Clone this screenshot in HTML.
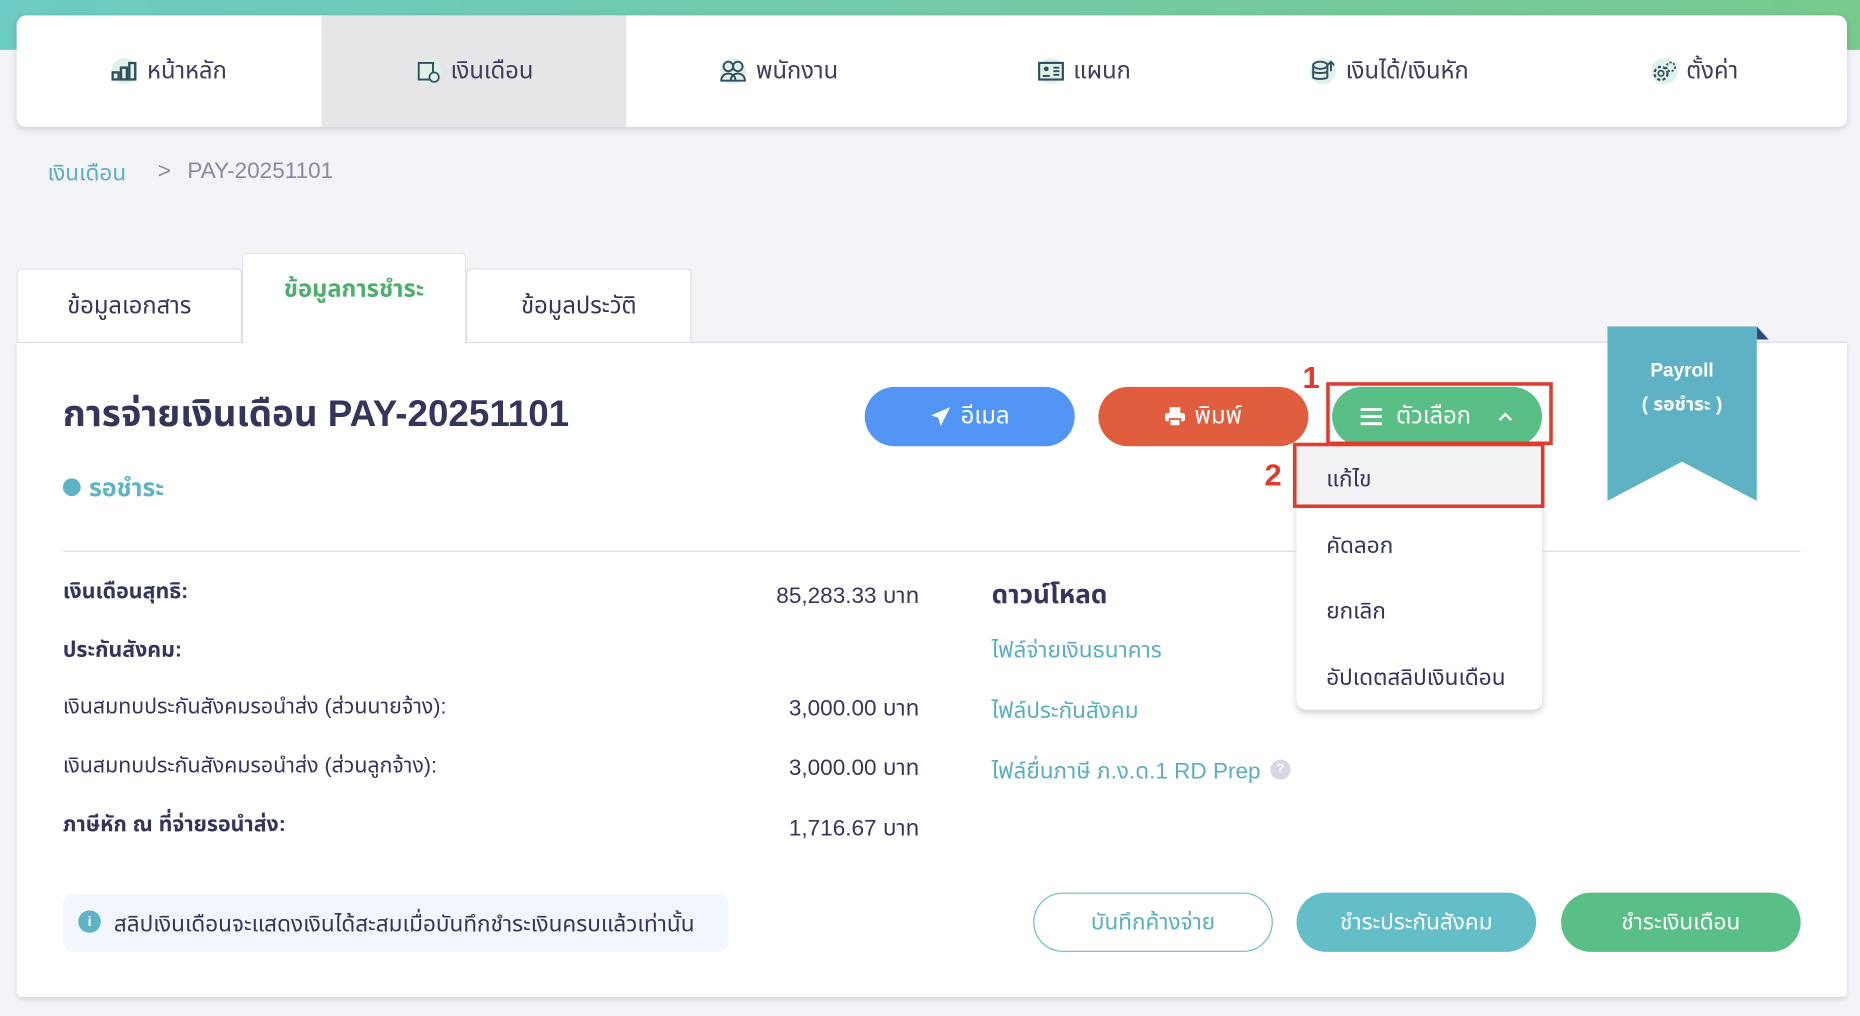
<!DOCTYPE html>
<html><head><meta charset="utf-8">
<style>
*{box-sizing:border-box;margin:0;padding:0}
html,body{width:1860px;height:1016px;overflow:hidden;background:#f3f3f8;font-family:"Liberation Sans","Noto Sans Thai","Loma","Garuda",sans-serif;color:#34355a}
#w{position:absolute;left:0;top:0;width:1568px;height:856px;transform:scale(1.18622,1.18692);transform-origin:0 0}
.a{position:absolute}
.bar{left:0;top:0;width:1568px;height:42px;background:linear-gradient(90deg,#6ccbc3,#77c98c)}
.nav{left:14px;top:13px;width:1543px;height:94px;background:#fff;border-radius:8px;box-shadow:0 2px 6px rgba(0,0,0,.15);overflow:hidden;display:flex}
.nav div{flex:1;display:flex;align-items:center;justify-content:center;font-size:20px;color:#3c3d5a;gap:8px}
.nav div.on{background:#e6e6e8}
.ic{width:22px;height:22px;border-radius:50%;background:#dff1e8;display:inline-flex;align-items:center;justify-content:center}
.tab{background:#fff;border:1px solid #dcdce4;border-bottom:none;border-radius:4px 4px 0 0;display:flex;align-items:center;justify-content:center;font-size:20px;color:#34355a}
.card{left:14px;top:288px;width:1543px;height:552px;background:#fff;border-top:1px solid #dcdce4;box-shadow:0 2px 4px rgba(0,0,0,.12);border-radius:0 0 4px 4px}
.btn{border-radius:25px;color:#fff;font-size:20px;display:flex;align-items:center;justify-content:center;gap:8px}
.lbl{left:53px;font-size:18px;color:#34355a}
.val{right:793px;font-size:19px;color:#34355a;text-align:right}
.lnk{left:836px;font-size:19px;color:#5aaebf}
.dd{font-size:19px;left:1118px;color:#34355a}
</style></head><body>
<div id="w">
<div class="a bar"></div>
<div class="a nav">
 <div><span class="ic"><svg width="22" height="16" viewBox="0 0 22 16"><rect x="1" y="9" width="5" height="6" fill="none" stroke="#2f4f5f" stroke-width="2"/><rect x="8" y="5" width="5" height="10" fill="none" stroke="#2f4f5f" stroke-width="2"/><rect x="15" y="1" width="5" height="14" fill="none" stroke="#2f4f5f" stroke-width="2"/></svg></span>หน้าหลัก</div>
 <div class="on"><span class="ic"><svg width="20" height="20" viewBox="0 0 20 20"><rect x="2" y="3" width="12" height="14" fill="none" stroke="#2f4f5f" stroke-width="1.6"/><circle cx="15" cy="15" r="4" fill="#dff1e8" stroke="#2f4f5f" stroke-width="1.4"/></svg></span>เงินเดือน</div>
 <div><span class="ic"><svg width="22" height="18" viewBox="0 0 22 18"><circle cx="7" cy="5" r="4" fill="none" stroke="#2f4f5f" stroke-width="1.6"/><circle cx="15" cy="5" r="4" fill="none" stroke="#2f4f5f" stroke-width="1.6"/><path d="M1 17c0-4 3-6 6-6s6 2 6 6zM9 17c0-4 3-6 6-6s6 2 6 6z" fill="none" stroke="#2f4f5f" stroke-width="1.6"/></svg></span>พนักงาน</div>
 <div><span class="ic"><svg width="22" height="18" viewBox="0 0 22 18"><rect x="1" y="2" width="20" height="14" fill="none" stroke="#2f4f5f" stroke-width="1.8"/><circle cx="7" cy="7" r="2" fill="#2f4f5f"/><path d="M4 13h6M13 6h5M13 9h5M13 12h5" stroke="#2f4f5f" stroke-width="1.6"/></svg></span>แผนก</div>
 <div><span class="ic"><svg width="20" height="20" viewBox="0 0 20 20"><ellipse cx="8" cy="5" rx="6" ry="3" fill="none" stroke="#2f4f5f" stroke-width="1.6"/><path d="M2 5v10c0 2 12 2 12 0V5M2 10c0 2 12 2 12 0" fill="none" stroke="#2f4f5f" stroke-width="1.6"/><path d="M17 10V2M14 5l3-3 3 3" fill="none" stroke="#2f4f5f" stroke-width="1.6"/></svg></span>เงินได้/เงินหัก</div>
 <div><span class="ic"><svg width="24" height="20" viewBox="0 0 24 20"><circle cx="9" cy="12" r="6" fill="none" stroke="#2f4f5f" stroke-width="2" stroke-dasharray="3 2"/><circle cx="9" cy="12" r="2.5" fill="none" stroke="#2f4f5f" stroke-width="1.5"/><circle cx="18" cy="6" r="4" fill="none" stroke="#2f4f5f" stroke-width="1.6" stroke-dasharray="2 1.5"/></svg></span>ตั้งค่า</div>
</div>
<div class="a" style="left:40px;top:132px;font-size:19px;color:#5aaebf">เงินเดือน</div>
<div class="a" style="left:133px;top:134px;font-size:19px;color:#8a8a9a">&gt;</div>
<div class="a" style="left:158px;top:134px;font-size:19px;color:#8a8a9a">PAY-20251101</div>
<div class="a card"></div>
<div class="a tab" style="left:14px;top:226px;width:190px;height:62px">ข้อมูลเอกสาร</div>
<div class="a tab" style="left:204px;top:213px;width:189px;height:77px;color:#4caf6e;font-weight:bold;padding-bottom:16px;border-color:#e2e2ea">ข้อมูลการชำระ</div>
<div class="a tab" style="left:393px;top:226px;width:190px;height:62px">ข้อมูลประวัติ</div>
<div class="a" style="left:53px;top:326px;font-size:31px;font-weight:bold;color:#34355a">การจ่ายเงินเดือน PAY-20251101</div>
<div class="a" style="left:53px;top:403px;width:15px;height:15px;border-radius:50%;background:#5eb3c4"></div>
<div class="a" style="left:75px;top:397px;font-size:21px;font-weight:bold;color:#5eb3c4">รอชำระ</div>
<div class="a btn" style="left:729px;top:326px;width:177px;height:50px;background:#5295f5"><svg width="18" height="18" viewBox="0 0 18 18"><path d="M17 1L1 8l6 2 2 7z" fill="#fff"/></svg>อีเมล</div>
<div class="a btn" style="left:926px;top:326px;width:177px;height:50px;background:#e05d3d"><svg width="17" height="16" viewBox="0 0 17 16"><rect x="4" y="0" width="9" height="5" fill="#fff"/><rect x="0" y="5" width="17" height="7" rx="2" fill="#fff"/><rect x="4" y="10" width="9" height="6" fill="#fff" stroke="#e05d3d" stroke-width="1.5"/></svg>พิมพ์</div>
<div class="a btn" style="left:1123px;top:326px;width:177px;height:50px;background:#5abf86;gap:12px"><svg width="18" height="16" viewBox="0 0 18 16"><path d="M0 2h18M0 8h18M0 14h18" stroke="#fff" stroke-width="2.4"/></svg>ตัวเลือก<svg width="14" height="10" viewBox="0 0 14 10" style="margin-left:10px"><path d="M2 8l5-5 5 5" fill="none" stroke="#fff" stroke-width="2"/></svg></div>
<div class="a" style="left:1118px;top:322px;width:191px;height:53px;border:3px solid #e03c2d"></div>
<div class="a" style="left:1098px;top:303px;font-size:26px;font-weight:bold;color:#e03c2d">1</div>
<div class="a" style="left:1093px;top:374px;width:207px;height:224px;background:#fff;border-radius:0 0 8px 8px;box-shadow:0 3px 6px rgba(0,0,0,.18)"></div>
<div class="a" style="left:1093px;top:376px;width:207px;height:50px;background:#f3f3f6"></div>
<div class="a" style="left:1090px;top:373px;width:212px;height:55px;border:3px solid #e03c2d"></div>
<div class="a" style="left:1066px;top:385px;font-size:26px;font-weight:bold;color:#e03c2d">2</div>
<div class="a dd" style="top:390px">แก้ไข</div>
<div class="a dd" style="top:446px">คัดลอก</div>
<div class="a dd" style="top:501px">ยกเลิก</div>
<div class="a dd" style="top:557px">อัปเดตสลิปเงินเดือน</div>
<svg class="a" style="left:1355px;top:275px" width="138" height="150" viewBox="0 0 138 150"><path d="M126 0l10 11h-10z" fill="#2b4a7a"/><path d="M0 0h126v147l-63-33-63 33z" fill="#5eb2c3"/></svg>
<div class="a" style="left:1355px;top:298px;width:126px;text-align:center;color:#fff;font-weight:bold;font-size:16px;line-height:29px">Payroll<br>( รอชำระ )</div>
<div class="a" style="left:53px;top:464px;width:1040px;height:1px;background:#dcdce4"></div>
<div class="a" style="left:1300px;top:464px;width:218px;height:1px;background:#dcdce4"></div>
<div class="a lbl" style="top:486px;font-weight:bold">เงินเดือนสุทธิ:</div>
<div class="a val" style="top:488px">85,283.33 บาท</div>
<div class="a lbl" style="top:535px;font-weight:bold">ประกันสังคม:</div>
<div class="a lbl" style="top:583px">เงินสมทบประกันสังคมรอนำส่ง (ส่วนนายจ้าง):</div>
<div class="a val" style="top:583px">3,000.00 บาท</div>
<div class="a lbl" style="top:633px">เงินสมทบประกันสังคมรอนำส่ง (ส่วนลูกจ้าง):</div>
<div class="a val" style="top:633px">3,000.00 บาท</div>
<div class="a lbl" style="top:682px;font-weight:bold">ภาษีหัก ณ ที่จ่ายรอนำส่ง:</div>
<div class="a val" style="top:684px">1,716.67 บาท</div>
<div class="a" style="left:836px;top:485px;font-size:22px;font-weight:bold;color:#34355a">ดาวน์โหลด</div>
<div class="a lnk" style="top:534px">ไฟล์จ่ายเงินธนาคาร</div>
<div class="a lnk" style="top:585px">ไฟล์ประกันสังคม</div>
<div class="a lnk" style="top:636px">ไฟล์ยื่นภาษี ภ.ง.ด.1 RD Prep</div>
<div class="a" style="left:1071px;top:640px;width:17px;height:17px;border-radius:50%;background:#d8d8e4;color:#fff;font-size:11px;text-align:center;line-height:17px;font-weight:bold">?</div>
<div class="a" style="left:53px;top:753px;width:561px;height:49px;background:#f3f6fc;border-radius:8px"></div>
<div class="a" style="left:66px;top:767px;width:19px;height:19px;border-radius:50%;background:#5eb3c4;color:#fff;font-size:12px;text-align:center;line-height:19px;font-weight:bold">i</div>
<div class="a" style="left:96px;top:765px;font-size:19px;color:#34355a">สลิปเงินเดือนจะแสดงเงินได้สะสมเมื่อบันทึกชำระเงินครบแล้วเท่านั้น</div>
<div class="a btn" style="left:871px;top:752px;width:202px;height:50px;border:1.5px solid #6cbcc8;color:#5aaebf;font-size:19px">บันทึกค้างจ่าย</div>
<div class="a btn" style="left:1093px;top:752px;width:202px;height:50px;background:#64bec8;font-size:19px">ชำระประกันสังคม</div>
<div class="a btn" style="left:1316px;top:752px;width:202px;height:50px;background:#5abf86;font-size:19px">ชำระเงินเดือน</div>
</div>
</body></html>
